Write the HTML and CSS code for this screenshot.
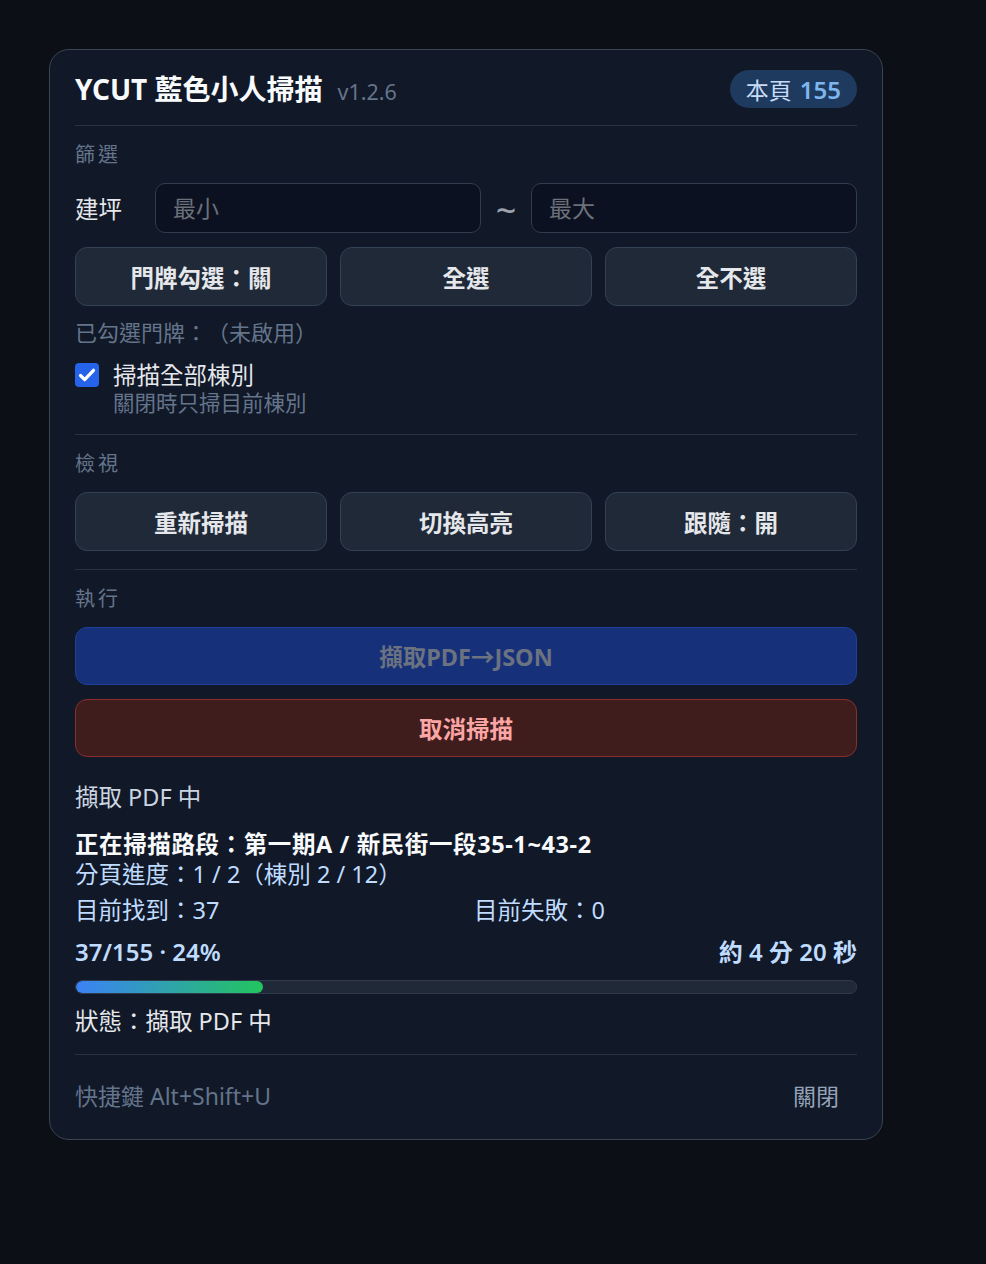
FILE: index.html
```html
<!DOCTYPE html>
<html lang="zh-Hant">
<head>
<meta charset="utf-8">
<title>YCUT 藍色小人掃描</title>
<link rel="stylesheet" href="styles.css">
</head>
<body>
<div class="page">
  <div class="panel">
    <header class="head">
      <h1 class="title">YCUT 藍色小人掃描<span class="ver">v1.2.6</span></h1>
      <span class="badge"><span class="badge-label">本頁</span><span class="badge-num">155</span></span>
    </header>
    <div class="divider head-divider"></div>

    <section class="sec">
      <div class="sec-label">篩選</div>
      <div class="range-row">
        <label class="range-label">建坪</label>
        <input class="field" type="text" placeholder="最小">
        <span class="tilde">~</span>
        <input class="field" type="text" placeholder="最大">
      </div>
      <div class="btn-row">
        <button class="btn">門牌勾選：關</button>
        <button class="btn">全選</button>
        <button class="btn">全不選</button>
      </div>
      <div class="note">已勾選門牌：（未啟用）</div>
      <div class="check-group">
        <div class="check-row">
          <span class="checkbox"><svg viewBox="0 0 24 24" width="24" height="24"><path d="M5.5 12.5l4.2 4.2 8.8-9.4" fill="none" stroke="#fff" stroke-width="3.2" stroke-linecap="round" stroke-linejoin="round"/></svg></span>
          <span class="check-label">掃描全部棟別</span>
        </div>
        <div class="check-sub">關閉時只掃目前棟別</div>
      </div>
    </section>
    <div class="divider"></div>

    <section class="sec">
      <div class="sec-label">檢視</div>
      <div class="btn-row">
        <button class="btn">重新掃描</button>
        <button class="btn">切換高亮</button>
        <button class="btn">跟隨：開</button>
      </div>
    </section>
    <div class="divider"></div>

    <section class="sec exec">
      <div class="sec-label">執行</div>
      <button class="wide primary" disabled>擷取PDF→JSON</button>
      <button class="wide danger">取消掃描</button>
      <div class="phase">擷取 PDF 中</div>
      <div class="route">正在掃描路段：第一期A / 新民街一段35-1~43-2</div>
      <div class="stat">分頁進度：1 / 2（棟別 2 / 12）</div>
      <div class="stat-grid">
        <div class="stat">目前找到：37</div>
        <div class="stat">目前失敗：0</div>
      </div>
      <div class="prog-head">
        <span>37/155 · 24%</span>
        <span>約 4 分 20 秒</span>
      </div>
      <div class="track"><div class="fill" style="width:24%"></div></div>
      <div class="status">狀態：擷取 PDF 中</div>
    </section>
    <div class="divider foot-divider"></div>

    <footer class="foot">
      <span class="hotkey">快捷鍵 Alt+Shift+U</span>
      <button class="close">關閉</button>
    </footer>
  </div>
</div>
</body>
</html>
```

FILE: styles.css
```css
* { box-sizing: border-box; }
html, body { margin: 0; background: #0c0f15; }
body {
  font-family: "Noto Sans", "Noto Sans CJK TC", sans-serif;
  color: #e5e7eb;
  text-spacing-trim: space-all;
}
.page { padding: 49px 0 0 49px; min-height: 1264px; }
.panel {
  width: 834px;
  background: #111827;
  border: 1px solid #3b4453;
  border-radius: 20px;
  padding: 20px 25px 24px;
}
.head {
  display: flex;
  align-items: center;
  justify-content: space-between;
  height: 38px;
}
.title {
  margin: 0;
  font-size: 28px;
  font-weight: 700;
  color: #f8fafc;
  line-height: 38px;
  padding-top: 3px;
  display: flex;
  align-items: baseline;
}
.ver {
  font-size: 21.5px;
  font-weight: 400;
  color: #64748b;
  margin-left: 15px;
}
.badge {
  display: inline-flex;
  align-items: center;
  height: 38px;
  padding: 0 16px;
  border-radius: 19px;
  background: #1e3a5f;
  gap: 8px;
}
.badge-label { font-size: 23px; color: #c7dcf6; }
.badge-num { font-size: 24px; font-weight: 600; color: #7db6ee; }

.divider { height: 1px; background: #283243; margin-top: 18px; }
.head-divider { margin-top: 17px; }
.foot-divider { margin-top: 18px; }

.sec { display: flex; flex-direction: column; }
.sec-label {
  margin-top: 15px;
  font-size: 20px;
  line-height: 28px;
  letter-spacing: 3px;
  color: #64748b;
}
.range-row {
  margin-top: 14px;
  display: grid;
  grid-template-columns: 68px 1fr 26px 1fr;
  column-gap: 12px;
  align-items: center;
  height: 50px;
}
.range-label { font-size: 23.5px; color: #e5e7eb; }
.field {
  height: 50px;
  width: 100%;
  border: 1px solid #313c4e;
  border-radius: 10px;
  background: #0b1120;
  padding: 0 17px;
  font-family: inherit;
  font-size: 23px;
  color: #e5e7eb;
  outline: none;
}
.field::placeholder { color: #6b7079; }
.tilde {
  font-size: 36px;
  line-height: 30px;
  color: #9ca3af;
  text-align: center;
  padding-top: 6px;
}

.btn-row {
  margin-top: 14px;
  display: grid;
  grid-template-columns: repeat(3, 1fr);
  column-gap: 13px;
}
.btn {
  height: 59px;
  border: 1px solid #334155;
  border-radius: 12px;
  background: #1f2937;
  color: #e5e7eb;
  font-family: inherit;
  font-size: 23.5px;
  font-weight: 700;
}
.note {
  margin-top: 12px;
  font-size: 22px;
  line-height: 28px;
  color: #64748b;
}
.check-group { margin-top: 14px; }
.check-row {
  display: flex;
  align-items: center;
  gap: 14px;
  height: 30px;
}
.checkbox {
  width: 24px;
  height: 24px;
  border-radius: 4px;
  background: #2563eb;
  display: block;
}
.checkbox svg { display: block; }
.check-label { font-size: 23.5px; line-height: 30px; color: #e5e7eb; }
.check-sub {
  margin-left: 38px;
  font-size: 21.5px;
  line-height: 26px;
  color: #64748b;
}

.wide {
  margin-top: 14px;
  height: 58px;
  width: 100%;
  border-radius: 12px;
  font-family: inherit;
  font-size: 23.5px;
  font-weight: 700;
}
.primary {
  background: #16307a;
  border: 1px solid #1e3f9a;
  color: #6b7280;
}
.danger {
  background: #3f1d1d;
  border: 1px solid #8a2d2d;
  color: #fca5a5;
}
.phase {
  margin-top: 25px;
  font-size: 23.5px;
  line-height: 30px;
  color: #cbd5e1;
}
.route {
  margin-top: 17px;
  font-size: 23.5px;
  font-weight: 700;
  letter-spacing: 0.6px;
  line-height: 30px;
  color: #f8fafc;
}
.stat {
  font-size: 23.5px;
  line-height: 30px;
  color: #bfdbfe;
}
.stat-grid {
  margin-top: 6px;
  display: grid;
  grid-template-columns: 1fr 1fr;
  column-gap: 16px;
}
.prog-head {
  margin-top: 12px;
  display: flex;
  justify-content: space-between;
  font-size: 24px;
  font-weight: 600;
  line-height: 30px;
  color: #bfdbfe;
}
.track {
  margin-top: 13px;
  height: 14px;
  border-radius: 7px;
  background: #1f2937;
  border: 1px solid #2f3a4b;
  overflow: hidden;
}
.fill {
  height: 100%;
  border-radius: 7px;
  background: linear-gradient(90deg, #3b82f6, #22c55e);
}
.status {
  margin-top: 12px;
  font-size: 23.5px;
  line-height: 30px;
  color: #e5e7eb;
}
.foot {
  margin-top: 20px;
  height: 40px;
  display: flex;
  align-items: center;
  justify-content: space-between;
}
.hotkey { font-size: 23px; color: #64748b; }
.close {
  height: 40px;
  padding: 0 18px;
  border: none;
  background: transparent;
  font-family: inherit;
  font-size: 23px;
  color: #94a3b8;
}
```
